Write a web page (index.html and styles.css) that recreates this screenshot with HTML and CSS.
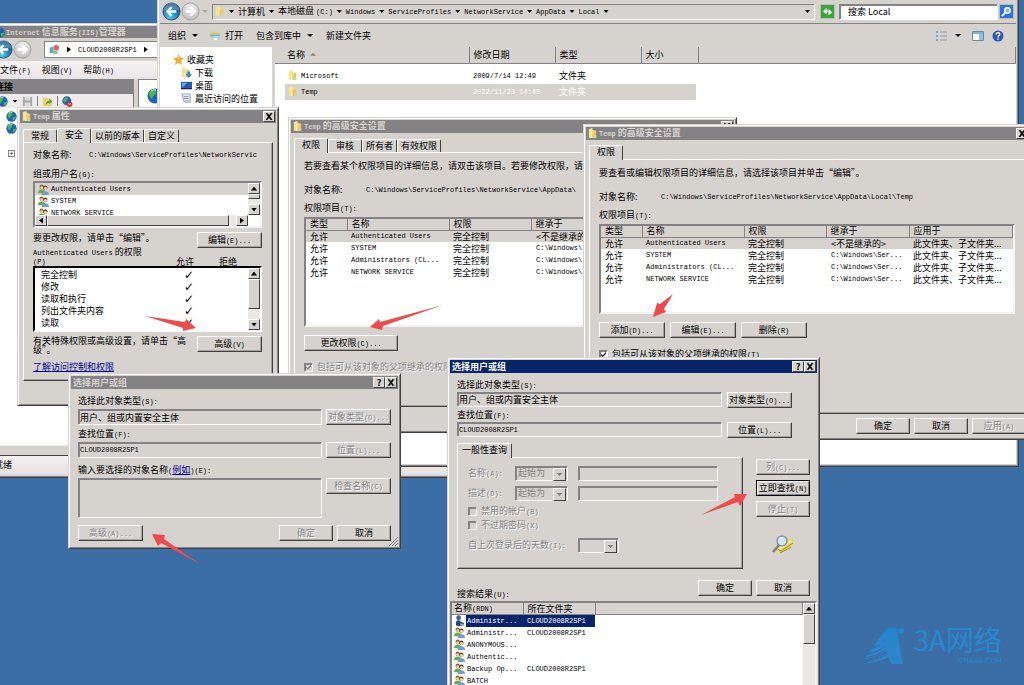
FILE: index.html
```html
<!DOCTYPE html>
<html lang="zh-CN">
<head>
<meta charset="utf-8">
<title>Temp 的高级安全设置</title>
<link rel="stylesheet" href="styles.css">
</head>
<body>
<svg class="defs" aria-hidden="true">
  <defs>
    <linearGradient id="gold" x1="0" y1="0" x2="1" y2="1"><stop offset="0" stop-color="#fff3a8"/><stop offset="1" stop-color="#e0ac32"/></linearGradient>
    <radialGradient id="ball" cx=".4" cy=".8" r=".8"><stop offset="0" stop-color="#4fd0f4"/><stop offset=".6" stop-color="#1878b4"/><stop offset="1" stop-color="#0d3f78"/></radialGradient>
    <radialGradient id="pale" cx=".5" cy=".3" r=".8"><stop offset="0" stop-color="#f2f2f2"/><stop offset="1" stop-color="#b4b4b4"/></radialGradient>
    <linearGradient id="logo" x1="0" y1="0" x2="0" y2="1"><stop offset="0" stop-color="#2485cc"/><stop offset="1" stop-color="#2f86cb"/></linearGradient>
  </defs>
  <symbol id="folder" viewBox="0 0 10 12"><path d="M1 1l4-1v10l-4 1z" fill="#f7e58d"/><path d="M4 2l5 1v8H2z" fill="url(#gold)"/><path d="M4 2l1 9H3z" fill="#fff8cc"/><path d="M7 7l2 1v3H6z" fill="#c8dc9a"/></symbol>
  <symbol id="users" viewBox="0 0 12 12"><circle cx="4" cy="3" r="2.4" fill="#8a6a3c"/><circle cx="4" cy="4" r="1.6" fill="#f3cf9d"/><path d="M0 10q0-4 4-4t4 4z" fill="#69a84c"/><circle cx="8" cy="4" r="2.4" fill="#6d4421"/><circle cx="8.200" cy="5" r="1.600" fill="#f8d8b4"/><path d="M4 12q0-4 4-4t4 4z" fill="#6c9fd3"/></symbol>
  <symbol id="user" viewBox="0 0 12 12"><circle cx="5" cy="3" r="2.600" fill="#42619a"/><path d="M3 6q3-1 4 1l4 2v3H3q-2-2 0-6" fill="#24457f"/><path d="M7 9l4 1v2H7z" fill="#8db0de"/></symbol>
  <symbol id="back" viewBox="0 0 20 20"><circle cx="10" cy="10" r="9" fill="url(#ball)" stroke="#31567c"/><path d="M2 9a8 8 0 0 1 16 0q-8-3-16 0" fill="#fff" opacity=".25"/><path d="M15 10H6M10 5.500L5.500 10l4.500 4.500" fill="none" stroke="#fff" stroke-width="2.400"/></symbol>
  <symbol id="fwd" viewBox="0 0 20 20"><circle cx="10" cy="10" r="9" fill="url(#pale)" stroke="#a2a2a2"/><path d="M5 10h9M10 5.500l4.500 4.500-4.500 4.500" fill="none" stroke="#fff" stroke-width="2.400"/></symbol>
  <symbol id="globe" viewBox="0 0 16 16"><circle cx="8" cy="8" r="7.500" fill="#1c62bd"/><path d="M2 5q3-5 8-3-2 2-1 4-3 1-4 5-3-2-3-6M10 9l5-1q-1 5-5 6z" fill="#49b64a"/><path d="M4 3q3-2 5-1" stroke="#cbe9ff" fill="none"/></symbol>
  <symbol id="globestop" viewBox="0 0 16 16"><circle cx="7" cy="7" r="6.500" fill="#1c62bd"/><path d="M2 5q3-4 7-3-2 2-1 4-3 1-4 4-2-2-2-5" fill="#49b64a"/><circle cx="11" cy="12" r="4" fill="#d62b2b"/><path d="M9.500 10.500l3 3M12.500 10.500l-3 3" stroke="#fff"/></symbol>
  <symbol id="openfolder" viewBox="0 0 12 12"><path d="M1 2h4l1 1h5v7H1z" fill="#ecc557"/><path d="M0 5h11v2H0z" fill="#6fb4e5"/><path d="M2 8q5-3 9-1v4H2z" fill="#a5d8f2"/><path d="M4 9h4v2H4z" fill="#fff"/></symbol>
  <symbol id="upfolder" viewBox="0 0 12 12"><path d="M1 2h4l1 1h5v8H1z" fill="#f0cf66"/><path d="M4 10q0-4 4-5V3l3 3-3 3V7Q5 8 4 10" fill="#4ea63c"/></symbol>
  <symbol id="pc" viewBox="0 0 12 12"><path d="M0 4l5-3 6 2v7l-5 2-6-2z" fill="#dfe7ec"/><path d="M1 4l4-1v6l-4 1z" fill="#6d9cc6"/><circle cx="8" cy="4" r="3" fill="#d66"/><path d="M4 7l5 1v3l-5-1z" fill="#79c081"/></symbol>
  <symbol id="disk" viewBox="0 0 12 12"><path d="M1 1h10v10H1z" fill="#a8a8ac"/><path d="M3 1h6v4H3zM3 7h6v4H3z" fill="#ddd"/></symbol>
</svg>

<main class="desktop">

  <section class="win iis" aria-label="Internet 信息服务管理器">
    <header class="title"><svg class="ico"><use href="#globe"/></svg><h2><span class="en">Internet</span> 信息服务<span class="en">(IIS)</span>管理器</h2></header>
    <div class="iis-nav">
      <svg class="round"><use href="#back"/></svg><svg class="round"><use href="#fwd"/></svg>
      <div class="iis-addr"><svg class="ico"><use href="#pc"/></svg><i class="right"></i><span class="en">CLOUD2008R2SP1</span><i class="right"></i></div>
    </div>
    <nav class="iis-menu"><a href="#file">文件<span class="en">(F)</span></a><a href="#view">视图<span class="en">(V)</span></a><a href="#help">帮助<span class="en">(H)</span></a></nav>
    <div class="iis-main">
      <div class="iis-side">
        <h3>连接</h3>
        <div class="iis-tools"><svg class="ico"><use href="#globe"/></svg><i class="down"></i><svg class="ico"><use href="#disk"/></svg><b></b><svg class="ico"><use href="#upfolder"/></svg><b></b><svg class="ico"><use href="#globestop"/></svg></div>
        <div class="iis-tree"><svg class="ico"><use href="#globe"/></svg><svg class="ico"><use href="#globe"/></svg><span class="plus">+</span></div>
        <div class="iis-hscroll"></div>
      </div>
      <div class="iis-pane"><svg><use href="#globe"/></svg></div>
    </div>
    <footer class="iis-status">就绪</footer>
  </section>

  <section class="win explorer" aria-label="Local">
    <div class="ex-nav">
      <svg class="round"><use href="#back"/></svg><svg class="round"><use href="#fwd"/></svg><i class="down faint"></i>
      <div class="crumbs"><svg class="ico"><use href="#folder"/></svg><i class="down"></i><span>计算机</span><i class="down"></i><span>本地磁盘 <span class="en">(C:)</span></span><i class="down"></i><span class="en">Windows</span><i class="down"></i><span class="en">ServiceProfiles</span><i class="down"></i><span class="en">NetworkService</span><i class="down"></i><span class="en">AppData</span><i class="down"></i><span class="en">Local</span><i class="down"></i><i class="down last"></i></div>
      <button class="refresh" aria-label="刷新"><svg viewBox="0 0 14 14"><path d="M6 3L2 7l4 3V8h1V5H6zM8 4l4 4-4 3V9" fill="#fff"/></svg></button>
      <input class="search" type="text" aria-label="搜索" value="搜索 Local">
      <button class="find" aria-label="搜索"><svg viewBox="0 0 14 14"><circle cx="8" cy="6" r="3" fill="#7db7ff" stroke="#fff" stroke-width="1.500"/><path d="M6 8l-4 4" stroke="#fff" stroke-width="2"/></svg></button>
    </div>
    <div class="ex-tools">
      <button class="plain">组织<i class="down"></i></button>
      <button class="plain open"><svg class="ico"><use href="#openfolder"/></svg>打开</button>
      <button class="plain lib">包含到库中<i class="down"></i></button>
      <button class="plain">新建文件夹</button>
      <span class="ex-view">
        <svg viewBox="0 0 12 12"><path d="M1 2h2M1 6h2M1 10h2" stroke="#7aa5d0" stroke-width="2"/><path d="M5 2h7M5 6h7M5 10h7" stroke="#8b98a8"/></svg><i class="down"></i>
        <svg viewBox="0 0 12 12"><path d="M.5 1.500h11v9H.5z" fill="#fff" stroke="#688aa8"/><path d="M1 2h10v2H1z" fill="#84b3dc"/><path d="M7 4h4v6H7z" fill="#8cc5e6"/></svg>
        <svg viewBox="0 0 12 12"><circle cx="6" cy="6" r="5.500" fill="#2c56b4"/><path d="M4 4.500q.5-2 2.200-1.800 2 .3 1.500 2Q6 6 6 7.500M6 8.500V10" fill="none" stroke="#fff" stroke-width="1.300"/></svg>
      </span>
    </div>
    <div class="ex-main">
      <ul class="ex-side">
        <li class="top"><svg class="ico" viewBox="0 0 12 12"><path d="M6 0l1.700 4.200L12 4.500 8.800 7.400 10 12 6 9.500 2 12l1.200-4.600L0 4.500l4.300-.3z" fill="#f6a82b"/><path d="M6 2l1 3H5z" fill="#ffe28d"/></svg>收藏夹</li>
        <li><svg class="ico" viewBox="0 0 12 12"><use href="#folder" width="10" height="12"/><path d="M7 5h3v3h2l-3.500 4L5 8h2z" fill="#2f83d8"/></svg>下载</li>
        <li><svg class="ico" viewBox="0 0 12 12"><path d="M0 2h12v8H0z" fill="#2459b0"/><path d="M1 3h6L2 8H1z" fill="#6da5e6"/><path d="M0 9h12v1H0z" fill="#213"/></svg>桌面</li>
        <li><svg class="ico" viewBox="0 0 12 12"><path d="M1 1h9v8H3z" fill="#e2ebf2" stroke="#8ba6ba"/><path d="M3 4h5M3 6h5" stroke="#88a"/><path d="M4 8h7v3H4z" fill="#b5c8d5"/></svg>最近访问的位置</li>
      </ul>
      <div class="ex-list">
        <table>
          <colgroup><col class="e1"><col class="e2"><col class="e3"><col class="e4"><col></colgroup>
          <thead><tr><th>名称<i class="up"></i></th><th>修改日期</th><th>类型</th><th>大小</th><th></th></tr></thead>
          <tbody>
            <tr><td><svg class="ico"><use href="#folder"/></svg><span class="en">Microsoft</span></td><td class="en">2009/7/14 12:49</td><td>文件夹</td><td></td><td></td></tr>
            <tr class="picked"><td><svg class="ico"><use href="#folder"/></svg><span class="en">Temp</span></td><td class="en">2022/11/23 14:40</td><td>文件夹</td><td></td><td></td></tr>
          </tbody>
        </table>
      </div>
    </div>
  </section>

  <section class="win props" aria-label="Temp 属性">
    <header class="title"><svg class="ico"><use href="#folder"/></svg><h2><span class="en">Temp</span> 属性</h2><button class="cap x" aria-label="关闭"></button></header>
    <div class="tabs" role="tablist"><button class="tab wide" role="tab">常规</button><button class="tab wide on" role="tab" aria-selected="true">安全</button><button class="tab" role="tab">以前的版本</button><button class="tab" role="tab">自定义</button></div>
    <div class="panel">
      <p class="objname"><span>对象名称:</span><span class="en">C:\Windows\ServiceProfiles\NetworkServic</span></p>
      <p class="caption">组或用户名<span class="en">(G):</span></p>
      <div class="sunk groups">
        <ul>
          <li class="sel"><svg class="ico"><use href="#users"/></svg><span class="en">Authenticated Users</span></li>
          <li><svg class="ico"><use href="#users"/></svg><span class="en">SYSTEM</span></li>
          <li><svg class="ico"><use href="#users"/></svg><span class="en">NETWORK SERVICE</span></li>
        </ul>
        <div class="vbar"><button class="cap u" aria-label="向上"></button><i class="thumb short"></i><button class="cap d" aria-label="向下"></button></div>
        <div class="hbar"><button class="cap l" aria-label="向左"></button><i class="thumb"></i><button class="cap r" aria-label="向右"></button></div>
      </div>
      <div class="line"><p>要更改权限，请单击“编辑”。</p><button class="btn">编辑<span class="en">(E)...</span></button></div>
      <div class="allow"><p><span class="en">Authenticated Users</span> 的权限<br><span class="en">(P)</span></p><span>允许</span><span>拒绝</span></div>
      <div class="sunk perms">
        <table>
          <tr><td>完全控制</td><td>✓</td></tr>
          <tr><td>修改</td><td>✓</td></tr>
          <tr><td>读取和执行</td><td>✓</td></tr>
          <tr><td>列出文件夹内容</td><td>✓</td></tr>
          <tr><td>读取</td><td>✓</td></tr>
        </table>
        <div class="vbar"><button class="cap u" aria-label="向上"></button><i class="thumb"></i><button class="cap d" aria-label="向下"></button></div>
      </div>
      <div class="line tight"><p>有关特殊权限或高级设置，请单击“高级”。</p><button class="btn">高级<span class="en">(V)</span></button></div>
      <p class="more"><a href="#acl">了解访问控制和权限</a></p>
    </div>
  </section>

  <section class="win adv adv-view" aria-label="Temp 的高级安全设置">
    <header class="title"><svg class="ico"><use href="#folder"/></svg><h2><span class="en">Temp</span> 的高级安全设置</h2><button class="cap x" aria-label="关闭"></button></header>
    <div class="tabs" role="tablist"><button class="tab wide on" role="tab" aria-selected="true">权限</button><button class="tab wide" role="tab">审核</button><button class="tab" role="tab">所有者</button><button class="tab" role="tab">有效权限</button></div>
    <div class="panel">
      <p>若要查看某个权限项目的详细信息，请双击该项目。若要修改权限，请单击</p>
      <p class="objname"><span>对象名称:</span><span class="en">C:\Windows\ServiceProfiles\NetworkService\AppData\</span></p>
      <p class="caption">权限项目<span class="en">(T):</span></p>
      <div class="sunk entries">
        <table>
          <colgroup><col class="c1"><col class="c2"><col class="c3"><col class="c4"><col></colgroup>
          <thead><tr><th>类型</th><th>名称</th><th>权限</th><th>继承于</th><th></th></tr></thead>
          <tbody>
            <tr class="sel"><td>允许</td><td class="en">Authenticated Users</td><td>完全控制</td><td>&lt;不是继承的</td><td></td></tr>
            <tr><td>允许</td><td class="en">SYSTEM</td><td>完全控制</td><td class="en">C:\Windows\</td><td></td></tr>
            <tr><td>允许</td><td class="en">Administrators (CL...</td><td>完全控制</td><td class="en">C:\Windows\</td><td></td></tr>
            <tr><td>允许</td><td class="en">NETWORK SERVICE</td><td>完全控制</td><td class="en">C:\Windows\</td><td></td></tr>
          </tbody>
        </table>
      </div>
      <div class="acts"><button class="btn big">更改权限<span class="en">(C)...</span></button></div>
      <label class="check off"><input type="checkbox" checked disabled>包括可从该对象的父项继承的权限</label>
    </div>
    <footer class="foot"></footer>
  </section>

  <section class="win adv adv-edit" aria-label="Temp 的高级安全设置">
    <header class="title"><svg class="ico"><use href="#folder"/></svg><h2><span class="en">Temp</span> 的高级安全设置</h2><button class="cap x" aria-label="关闭"></button></header>
    <div class="tabs" role="tablist"><button class="tab wide on" role="tab" aria-selected="true">权限</button></div>
    <div class="panel">
      <p>要查看或编辑权限项目的详细信息，请选择该项目并单击“编辑”。</p>
      <p class="objname"><span>对象名称:</span><span class="en">C:\Windows\ServiceProfiles\NetworkService\AppData\Local\Temp</span></p>
      <p class="caption">权限项目<span class="en">(T):</span></p>
      <div class="sunk entries">
        <table>
          <colgroup><col class="c1"><col class="c2"><col class="c3"><col class="c4"><col></colgroup>
          <thead><tr><th>类型</th><th>名称</th><th>权限</th><th>继承于</th><th>应用于</th></tr></thead>
          <tbody>
            <tr class="sel"><td>允许</td><td class="en">Authenticated Users</td><td>完全控制</td><td>&lt;不是继承的&gt;</td><td>此文件夹、子文件夹...</td></tr>
            <tr><td>允许</td><td class="en">SYSTEM</td><td>完全控制</td><td class="en">C:\Windows\Ser...</td><td>此文件夹、子文件夹...</td></tr>
            <tr><td>允许</td><td class="en">Administrators (CL...</td><td>完全控制</td><td class="en">C:\Windows\Ser...</td><td>此文件夹、子文件夹...</td></tr>
            <tr><td>允许</td><td class="en">NETWORK SERVICE</td><td>完全控制</td><td class="en">C:\Windows\Ser...</td><td>此文件夹、子文件夹...</td></tr>
          </tbody>
        </table>
      </div>
      <div class="acts"><button class="btn">添加<span class="en">(D)...</span></button><button class="btn">编辑<span class="en">(E)...</span></button><button class="btn">删除<span class="en">(R)</span></button></div>
      <label class="check"><input type="checkbox" checked><span>包括可从该对象的父项继承的权限<span class="en">(T)</span></span></label>
    </div>
    <footer class="foot"><button class="btn">确定</button><button class="btn">取消</button><button class="btn" disabled>应用<span class="en">(A)</span></button></footer>
  </section>

  <section class="win pick pick-basic" aria-label="选择用户或组">
    <header class="title"><h2>选择用户或组</h2><button class="cap q" aria-label="帮助">?</button><button class="cap x" aria-label="关闭"></button></header>
    <div class="form">
      <label for="type1">选择此对象类型<span class="en">(S):</span></label>
      <div class="row"><input id="type1" type="text" readonly value="用户、组或内置安全主体"><button class="btn" disabled>对象类型<span class="en">(O)...</span></button></div>
      <label for="loc1">查找位置<span class="en">(F):</span></label>
      <div class="row"><input id="loc1" class="en" type="text" readonly value="CLOUD2008R2SP1"><button class="btn" disabled>位置<span class="en">(L)...</span></button></div>
      <label class="names" for="names1">输入要选择的对象名称<span class="en">(</span><a href="#sample">例如</a><span class="en">)(E):</span></label>
      <div class="row"><textarea id="names1" readonly></textarea><button class="btn" disabled>检查名称<span class="en">(C)</span></button></div>
      <div class="row ends"><button class="btn adva" disabled>高级<span class="en">(A)...</span></button><button class="btn" disabled>确定</button><button class="btn">取消</button></div>
    </div>
    <svg class="grip" viewBox="0 0 9 9"><path d="M0 9l9-9M3 9l6-6M6 9l3-3" stroke="#848284"/></svg>
  </section>

  <section class="win pick pick-full" aria-label="选择用户或组">
    <header class="title active"><h2>选择用户或组</h2><button class="cap q" aria-label="帮助">?</button><button class="cap x" aria-label="关闭"></button></header>
    <div class="form">
      <label for="type2">选择此对象类型<span class="en">(S):</span></label>
      <div class="row"><input id="type2" type="text" readonly value="用户、组或内置安全主体"><button class="btn">对象类型<span class="en">(O)...</span></button></div>
      <label for="loc2">查找位置<span class="en">(F):</span></label>
      <div class="row"><input id="loc2" class="en" type="text" readonly value="CLOUD2008R2SP1"><button class="btn">位置<span class="en">(L)...</span></button></div>
      <div class="query">
        <div class="query-main">
          <div class="tabs" role="tablist"><button class="tab on" role="tab" aria-selected="true">一般性查询</button></div>
          <div class="panel">
            <div class="cond"><label for="nm">名称<span class="en">(A):</span></label><span class="combo"><select disabled aria-label="名称条件"><option>起始为</option></select></span><input id="nm" type="text" disabled></div>
            <div class="cond"><label for="ds">描述<span class="en">(D):</span></label><span class="combo"><select disabled aria-label="描述条件"><option>起始为</option></select></span><input id="ds" type="text" disabled></div>
            <div class="ticks">
              <label class="check off"><input type="checkbox" disabled><span>禁用的帐户<span class="en">(B)</span></span></label>
              <label class="check off"><input type="checkbox" disabled><span>不过期密码<span class="en">(X)</span></span></label>
            </div>
            <div class="days"><label for="dy">自上次登录后的天数<span class="en">(I):</span></label><span class="combo"><select id="dy" disabled><option></option></select></span></div>
          </div>
        </div>
        <div class="query-side">
          <button class="btn" disabled>列<span class="en">(C)...</span></button>
          <button class="btn main">立即查找<span class="en">(N)</span></button>
          <button class="btn" disabled>停止<span class="en">(T)</span></button>
          <svg viewBox="0 0 24 19"><path d="M5 11l14-8 4 2-3 7-11 6-4-2z" fill="#e9d658"/><path d="M5 13l5 3 12-8M9 18l11-6" stroke="#a38c25" fill="none"/><path d="M8 14l12-8" stroke="#fff8b8" stroke-width="2"/><circle cx="11" cy="6" r="5" fill="#cdeafb" fill-opacity=".85" stroke="#7d95ae" stroke-width="1.500"/><path d="M8 10l-6 7" stroke="#777f8b" stroke-width="2.500"/><path d="M8 5q1-3 4-2" stroke="#fff" fill="none"/></svg>
        </div>
      </div>
      <div class="found"><span>搜索结果<span class="en">(U):</span></span><button class="btn">确定</button><button class="btn">取消</button></div>
    </div>
    <div class="sunk results">
      <table>
        <colgroup><col class="r1"><col class="r2"><col></colgroup>
        <thead><tr><th>名称<span class="en">(RDN)</span></th><th>所在文件夹</th><th></th></tr></thead>
        <tbody class="en">
          <tr class="hot"><td><svg class="ico"><use href="#user"/></svg><span>Administr...</span></td><td>CLOUD2008R2SP1</td><td></td></tr>
          <tr><td><svg class="ico"><use href="#users"/></svg><span>Administr...</span></td><td>CLOUD2008R2SP1</td><td></td></tr>
          <tr><td><svg class="ico"><use href="#users"/></svg><span>ANONYMOUS...</span></td><td></td><td></td></tr>
          <tr><td><svg class="ico"><use href="#users"/></svg><span>Authentic...</span></td><td></td><td></td></tr>
          <tr><td><svg class="ico"><use href="#users"/></svg><span>Backup Op...</span></td><td>CLOUD2008R2SP1</td><td></td></tr>
          <tr><td><svg class="ico"><use href="#users"/></svg><span>BATCH</span></td><td></td><td></td></tr>
        </tbody>
      </table>
      <div class="vbar"><button class="cap u" aria-label="向上"></button><i class="thumb fixed"></i></div>
    </div>
  </section>

  <svg class="arrows" viewBox="0 0 1024 685" aria-hidden="true">
    <path d="M145 316L185 322l1-3 10 9-13 3v-3zM443 305L380 322l-1-3-9 8 12 3 1-4zM673 294l-13 10-3-1-4 14 13-5-2-3zM200 564L164 539l1-4-13-1 6 12 3-3zM701 515l34-18-1-3 13 0-7 12-2-4z"/>
  </svg>

  <div class="brand">
    <svg viewBox="0 0 52 38"><path d="M13 19Q20 8 27 1h9q2 16 6 36H30l-2-7Q16 36 0 37q14-4 26-11l-1-2Q15 31 3 32l3-4q10-2 18-8v-1Q16 25 7 26l3-4q6-1 10-4z" fill="url(#logo)"/><path d="M1 36q14-2 26-9M5 31q11-2 20-8" fill="none" stroke="#3a6ea5"/><circle cx="40" cy="4" r="3" fill="#2485cc"/></svg>
    <p><strong>3A网络</strong><small>CNAAA.COM</small></p>
  </div>
</main>
</body>
</html>
```
FILE: styles.css
```css
:root {
  --face: #d6d3ce;
  --dim: #848284;
  --dark: #424142;
}

* { box-sizing: border-box; }

body, h2, h3, p, ul, table { margin: 0; padding: 0; }
ul { list-style: none; }

body, button, input, select, textarea {
  font-family: "Noto Sans CJK SC", "Liberation Sans", sans-serif;
  font-size: 9px;
  line-height: 12px;
  color: #000;
}

.en {
  font-family: "Liberation Mono", "Noto Sans CJK SC", monospace;
  font-size: 7px;
}

svg { display: block; flex: none; }
.defs { position: absolute; width: 0; height: 0; }
.ico { width: 11px; height: 11px; }
.round { width: 19px; height: 19px; }
a { color: #00009c; }

.desktop {
  position: relative;
  min-height: 100vh;
  height: 100vh;
  overflow: hidden;
  background: #3a6ea5;
  white-space: nowrap;
}

/* window frame */
.win {
  position: absolute;
  display: flex;
  flex-direction: column;
  padding: 2px;
  background: var(--face);
  border: 1px solid;
  border-color: var(--face) var(--dark) var(--dark) var(--face);
  box-shadow: inset 1px 1px #fff, inset -1px -1px var(--dim);
}

.title {
  display: flex;
  align-items: center;
  height: 13px;
  padding: 0 1px;
  background: var(--dim);
  color: var(--face);
}
.title.active { background: #08246b; color: #fff; }
.title h2 {
  flex: 1;
  padding-left: 1px;
  font-size: 9px;
  line-height: 12px;
  font-weight: bold;
}
.title h2 .en { font-size: 7px; }

.cap {
  position: relative;
  flex: none;
  width: 12px;
  height: 11px;
  padding: 0;
  background: var(--face);
  border: 1px solid;
  border-color: #fff var(--dark) var(--dark) #fff;
  font-size: 9px;
  line-height: 9px;
  font-weight: bold;
}
.cap.x::before, .cap.u::before, .cap.d::before, .cap.l::before, .cap.r::before {
  content: "";
  display: block;
  width: 6px;
  height: 4px;
  margin: auto;
  background: #000;
}
.cap.x::before {
  width: 7px;
  height: 7px;
  clip-path: polygon(0 0, 25% 0, 50% 30%, 75% 0, 100% 0, 65% 50%, 100% 100%, 75% 100%, 50% 70%, 25% 100%, 0 100%, 35% 50%);
}
.cap.u::before { clip-path: polygon(50% 0, 100% 100%, 0 100%); }
.cap.d::before { clip-path: polygon(0 0, 100% 0, 50% 100%); }
.cap.l::before { width: 4px; height: 6px; clip-path: polygon(100% 0, 100% 100%, 0 50%); }
.cap.r::before { width: 4px; height: 6px; clip-path: polygon(0 0, 100% 50%, 0 100%); }

.down, .up, .right {
  display: inline-block;
  flex: none;
  width: 6px;
  height: 3px;
  background: #000;
  clip-path: polygon(0 0, 100% 0, 50% 100%);
}
.up { background: var(--dim); clip-path: polygon(50% 0, 100% 100%, 0 100%); }
.right { width: 4px; height: 6px; clip-path: polygon(0 0, 100% 50%, 0 100%); }
.faint { background: #aaa; }

.btn {
  flex: none;
  width: 65px;
  height: 16px;
  padding: 0;
  background: var(--face);
  border: 1px solid;
  border-color: #fff var(--dark) var(--dark) #fff;
  box-shadow: inset -1px -1px #a5a29c;
}
.btn.main { border-color: #000; box-shadow: inset 1px 1px #fff, inset -1px -1px var(--dim); }
.btn:disabled, .off, .query .panel label { color: var(--dim); text-shadow: 1px 1px #fff; }

input, textarea, select {
  min-width: 0;
  margin: 0;
  padding: 0 1px;
  background: var(--face);
  border: 1px solid;
  border-color: var(--dim) #fff #fff var(--dim);
  border-radius: 0;
  outline: none;
  box-shadow: inset 1px 1px var(--dim);
}
textarea { resize: none; }

/* tabs and their panel */
.tabs { display: flex; align-items: flex-end; height: 14px; }
.tab {
  height: 13px;
  padding: 0 3px;
  background: var(--face);
  border: 1px solid;
  border-color: #fff var(--dark) transparent #fff;
  border-bottom: 0;
  border-radius: 2px 2px 0 0;
}
.tab.wide { padding: 0 7px; }
.tab.on { position: relative; height: 15px; margin-bottom: -1px; padding-bottom: 2px; }
.panel {
  border: 1px solid;
  border-color: #fff var(--dark) var(--dark) #fff;
  box-shadow: inset -1px -1px #a5a29c;
}

.sunk {
  display: flex;
  align-items: flex-start;
  background: #fff;
  border: 2px solid;
  border-color: var(--dim) #f4f3f1 #f4f3f1 var(--dim);
  overflow: hidden;
}
.sel { background: var(--face); }

table { border-collapse: collapse; border-spacing: 0; table-layout: fixed; width: 100%; }
th, td { padding: 0 0 0 4px; text-align: left; font-weight: normal; overflow: hidden; }
th {
  background: var(--face);
  border-right: 1px solid var(--dim);
  border-bottom: 1px solid var(--dim);
}

.check { display: flex; align-items: center; gap: 4px; }
.check input {
  appearance: none;
  position: relative;
  width: 9px;
  height: 9px;
  background: #fff;
}
.check input:disabled { background: var(--face); }
.check input:checked::after {
  content: "";
  position: absolute;
  inset: 1px;
  background: currentColor;
  clip-path: polygon(0 40%, 35% 70%, 100% 0, 100% 35%, 35% 100%, 0 70%);
}
.check.off input:checked { color: var(--dim); }

/* scroll bars */
.vbar, .hbar {
  display: flex;
  flex: none;
  background: #eae8e4;
}
.vbar { flex-direction: column; width: 12px; height: 100%; }
.thumb {
  flex: none;
  background: var(--face);
  border: 1px solid;
  border-color: #fff var(--dark) var(--dark) #fff;
}
.vbar .cap.d { margin-top: auto; }
.hbar .cap.r { margin-left: auto; }

/* IIS manager */
.iis { left: -10px; top: 23px; width: 640px; height: 455px; }
.iis .title { height: 12px; }
.iis-nav { display: flex; align-items: center; height: 23px; padding: 0 4px 0 1px; }
.iis-addr {
  display: flex;
  flex: 1;
  align-items: center;
  gap: 7px;
  height: 17px;
  margin-left: 12px;
  padding: 0 4px;
  background: #fff;
  border: 1px solid var(--dim);
}
.iis-menu {
  display: flex;
  align-items: center;
  gap: 11px;
  height: 18px;
  padding-left: 7px;
  background: linear-gradient(#f7f3f5, #e9e4e6);
}
.iis-menu a { color: #000; text-decoration: none; }
.iis-main { display: flex; flex: 1; min-height: 0; }
.iis-side { display: flex; flex-direction: column; width: 141px; border-right: 1px solid var(--dim); background: #fff; }
.iis-side h3 { height: 15px; padding-left: 2px; background: var(--dim); font-size: 9px; line-height: 15px; }
.iis-tools { display: flex; align-items: center; gap: 4px; height: 14px; padding-left: 4px; background: #efebec; }
.iis-tools b { width: 1px; height: 10px; background: var(--dim); }
.iis-tree { display: flex; flex: 1; flex-direction: column; align-items: flex-start; gap: 1px; padding: 3px 0 0 13px; }
.iis-tree .plus { width: 7px; height: 7px; margin: 15px 0 0 2px; border: 1px solid var(--dim); font-size: 7px; line-height: 5px; text-align: center; }
.iis-hscroll { height: 11px; background: var(--face); border-top: 1px solid #eee; border-bottom: 1px solid var(--dark); }
.iis-pane { flex: 1; margin-left: 4px; padding: 8px; background: #fff; border: 1px solid var(--dim); }
.iis-pane svg { width: 16px; height: 16px; }
.iis-status { height: 19px; padding-left: 1px; background: linear-gradient(#f5f1f2, #e6e0e0); line-height: 18px; }

/* explorer */
.explorer { left: 157px; top: -3px; width: 862px; height: 470px; }
.ex-nav { display: flex; align-items: center; height: 24px; padding: 0 2px; border-bottom: 1px solid var(--dim); }
.ex-nav .faint { margin: 0 4px 0 2px; }
.crumbs {
  display: flex;
  flex: 1;
  align-items: center;
  gap: 4px;
  height: 16px;
  padding: 0 4px 0 1px;
  border: 1px solid;
  border-color: var(--dim) #fff #fff var(--dim);
}
.crumbs .down { width: 5px; }
.crumbs .last { margin-left: auto; }
.refresh, .find { flex: none; width: 15px; height: 15px; padding: 0; border: 1px solid #bbb; background: #38a636; }
.refresh { margin: 0 4px 0 5px; }
.find { margin-left: 1px; background: #2e70dd; }
.search { width: 159px; height: 16px; padding-left: 8px; background: #fff; }
.ex-tools { display: flex; align-items: center; height: 23px; padding-left: 8px; }
.plain { display: flex; align-items: center; gap: 6px; padding: 0; border: 0; background: none; }
.plain.open { gap: 4px; margin: 0 13px 0 12px; }
.plain.lib { margin-right: 13px; }
.ex-view { display: flex; align-items: center; gap: 8px; margin-left: auto; padding-right: 12px; }
.ex-view svg { width: 12px; height: 12px; }
.ex-view .down { margin-right: 3px; }
.ex-main { display: flex; flex: 1; min-height: 0; background: #fff; }
.ex-side { width: 115px; padding: 7px 0 0 21px; border-right: 3px solid var(--face); }
.ex-side li { display: flex; gap: 3px; height: 13px; }
.ex-side .top { margin-left: -8px; }
.ex-list { flex: 1; }
.ex-list th { height: 16px; }
.ex-list th:first-child { padding-left: 12px; }
.ex-list .up { margin: 0 0 2px 5px; }
.ex-list tbody::before { content: ""; display: block; height: 4px; }
.ex-list td { height: 16px; }
.ex-list td:first-child { padding-left: 12px; }
.ex-list td .ico { display: inline-block; margin-right: 3px; vertical-align: middle; }
.ex-list td span { vertical-align: middle; }
.e1 { width: 194px; }
.e2 { width: 86px; }
.e3 { width: 86px; }
.e4 { width: 57px; }
.picked { background: linear-gradient(90deg, #fff 10px, var(--face) 10px 421px, #fff 421px); }
.picked td + td { color: #fff; }

/* Temp properties */
.props { left: 17px; top: 107px; width: 262px; }
.props .tabs, .adv .tabs { margin: 5px 3px 0; }
.props .panel { margin: 0 3px 22px; padding: 6px 10px 7px 9px; }
.objname { display: flex; overflow: hidden; }
.objname span:first-child { width: 56px; }
.props .caption { margin-top: 7px; }
.groups {
  display: grid;
  grid-template-columns: 1fr 12px;
  grid-template-rows: 32px 11px;
  align-items: stretch;
  height: 47px;
}
.groups ul { min-height: 0; overflow: hidden; }
.groups li { display: flex; align-items: center; height: 12px; padding-left: 3px; gap: 2px; }
.short { height: 5px; }
.groups .thumb { flex: 0 1 auto; }
.hbar .thumb { width: 182px; }
.line { display: flex; justify-content: space-between; align-items: flex-start; margin-top: 4px; }
.tight p { width: 160px; white-space: normal; line-height: 9px; }
.allow { display: flex; align-items: flex-end; line-height: 8px; }
.allow p { width: 146px; }
.allow > span { width: 44px; }
.perms { height: 66px; border-color: #000 #fff #fff #000; }
.perms table { flex: 1; width: auto; margin-top: 1px; }
.perms td { height: 12px; line-height: 12px; padding-left: 6px; }
.perms td + td { width: 64px; padding: 0; font-family: "DejaVu Sans", sans-serif; font-size: 12px; }
.perms .thumb { height: 30px; }
.more { margin-top: 7px; }

/* advanced security settings */
.adv { width: 449px; }
.adv-view { left: 288px; top: 117px; }
.adv-edit { left: 583px; top: 124px; }
.adv .panel { margin: 0 3px; padding: 7px 10px 33px 9px; }
.adv .panel > p { overflow: hidden; }
.adv .objname { margin-top: 12px; }
.adv .objname span:first-child { width: 62px; }
.adv .caption { margin: 6px 0 2px; }
.adv-edit .panel { padding-bottom: 52px; }
.entries { height: 110px; }
.adv-edit .entries { height: 90px; }
.entries th, .entries td { height: 12px; line-height: 11px; padding-top: 0; padding-bottom: 0; }
.entries th { height: 11px; line-height: 10px; }
.entries td:nth-child(4) { padding-left: 5px; }
.c1 { width: 41px; }
.c2 { width: 102px; }
.c3 { width: 82px; }
.c4 { width: 83px; }
.acts { display: flex; gap: 5px; margin: 8px 0 10px; }
.acts .btn { width: 66px; }
.acts .big { width: 94px; }
.foot { display: flex; justify-content: flex-end; gap: 4px; min-height: 23px; padding: 4px 3px 3px; }
.foot .btn, .found .btn, .query-side .btn { width: 54px; }

/* select users or groups */
.form { display: flex; flex-direction: column; padding: 6px 7px 0; }
.row { display: flex; align-items: flex-start; gap: 4px; }
.row input, .row textarea { flex: 1; height: 16px; }
.pick-basic { left: 68px; top: 373px; width: 333px; }
.pick-basic .form { padding-bottom: 5px; }
.pick-basic .row { margin: 1px 0 3px; }
.pick-basic .names { margin-top: 3px; }
.row textarea { height: 40px; }
.pick-basic .ends { margin: 4px 0 0; }
.ends .btn { width: 54px; }
.ends .adva { width: 65px; margin-right: auto; }
.grip { position: absolute; right: 2px; bottom: 2px; width: 9px; height: 9px; }

.pick-full { left: 447px; top: 357px; width: 373px; }
.pick-full .row { margin: 0 18px 1px 0; gap: 5px; }
.pick-full .row input { height: 15px; }
.query { display: flex; gap: 13px; margin-top: 4px; }
.query-main { flex: 1; }
.query .tab { padding: 0 4px 2px; }
.query .panel { padding: 7px 24px 15px 10px; }
.cond { display: flex; align-items: center; height: 16px; margin-bottom: 4px; }
.cond label { width: 47px; }
.cond input { flex: 1; height: 15px; margin-left: 10px; }
.combo { position: relative; width: 53px; height: 15px; }
.combo select { appearance: none; display: block; width: 100%; height: 15px; padding: 0 2px; color: var(--dim); opacity: 1; }
.combo::after {
  content: "";
  position: absolute;
  right: 2px;
  top: 2px;
  width: 11px;
  height: 11px;
  background:
    linear-gradient(var(--dim), var(--dim)) 50% 4px / 5px 1px no-repeat,
    linear-gradient(var(--dim), var(--dim)) 50% 5px / 3px 1px no-repeat,
    linear-gradient(var(--dim), var(--dim)) 50% 6px / 1px 1px no-repeat,
    var(--face);
  border: 1px solid;
  border-color: #fff var(--dark) var(--dark) #fff;
}
.ticks { display: flex; flex-direction: column; gap: 1px; margin: 1px 0 6px; }
.days { display: flex; align-items: center; }
.days label { width: 110px; }
.days .combo { width: 41px; }
.query-side { display: flex; flex-direction: column; align-items: center; gap: 5px; padding-top: 16px; }
.query-side svg { width: 24px; height: 19px; margin-top: 13px; }
.found { display: flex; align-items: flex-start; gap: 4px; margin-top: 11px; height: 21px; }
.found > span { flex: 1; align-self: flex-end; }
.results { height: 120px; }
.results th, .results td { height: 12px; line-height: 12px; padding-left: 4px; }
.results th { height: 10px; line-height: 10px; }
.results th:first-child, .results td:first-child { padding-left: 2px; }
.results td .ico { display: inline-block; margin-right: 2px; vertical-align: top; }
.hot td { background: #08246b; color: #fff; }
.hot td:first-child { background: linear-gradient(90deg, #fff 14px, #08246b 14px); }
.hot td:last-child { background: #fff; }
.r1 { width: 71px; }
.r2 { width: 72px; }
.fixed { height: 30px; }

/* annotations over the windows */
.arrows { position: absolute; left: 0; top: 0; width: 1024px; height: 685px; fill: #ef4b4b; pointer-events: none; }

.brand { position: absolute; right: 22px; bottom: 20px; display: flex; align-items: flex-end; color: #2888cf; }
.brand svg { width: 52px; height: 38px; }
.brand p { display: flex; flex-direction: column; align-items: flex-end; }
.brand strong { font-size: 28px; line-height: 36px; font-weight: normal; }
.brand small { font-family: "DejaVu Sans", sans-serif; font-size: 7px; line-height: 8px; }
```
